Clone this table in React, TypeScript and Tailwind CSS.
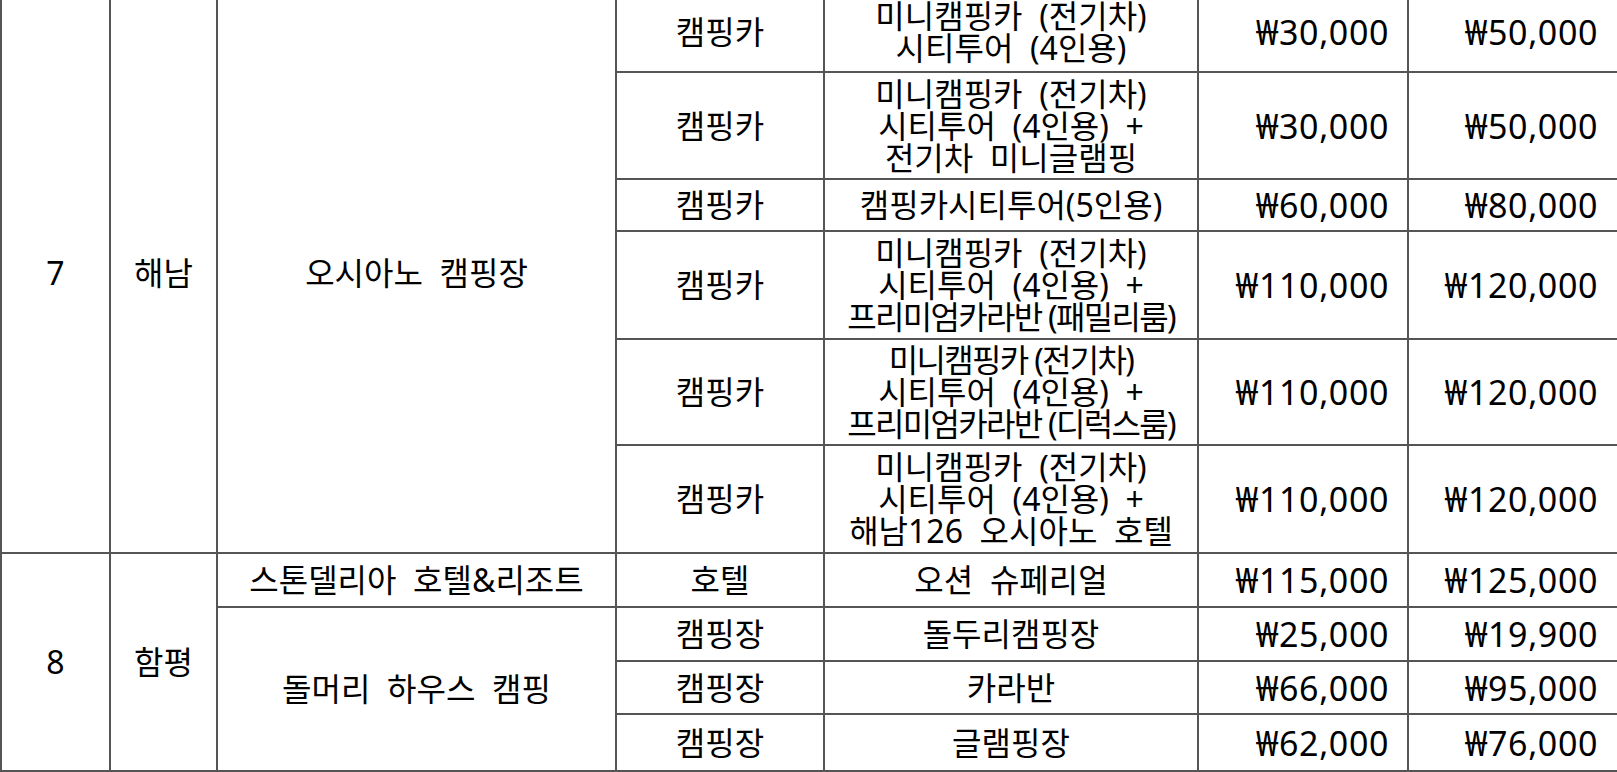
const font = { fontFamily: '"Noto Sans", "Noto Sans CJK KR", sans-serif' };

type Line = { t: string; tight?: boolean };
type Row = { kind: string; name: Line[]; week: string; weekend: string; h: string };

const haenam: Row[] = [
  { kind: "캠핑카", name: [{ t: "미니캠핑카  (전기차)" }, { t: "시티투어  (4인용)" }], week: "₩30,000", weekend: "₩50,000", h: "h-[80px]" },
  { kind: "캠핑카", name: [{ t: "미니캠핑카  (전기차)" }, { t: "시티투어  (4인용)  +" }, { t: "전기차  미니글램핑" }], week: "₩30,000", weekend: "₩50,000", h: "h-[107px]" },
  { kind: "캠핑카", name: [{ t: "캠핑카시티투어(5인용)" }], week: "₩60,000", weekend: "₩80,000", h: "h-[52px]" },
  { kind: "캠핑카", name: [{ t: "미니캠핑카  (전기차)" }, { t: "시티투어  (4인용)  +" }, { t: "프리미엄카라반 (패밀리룸)", tight: true }], week: "₩110,000", weekend: "₩120,000", h: "h-[108px]" },
  { kind: "캠핑카", name: [{ t: "미니캠핑카 (전기차)", tight: true }, { t: "시티투어  (4인용)  +" }, { t: "프리미엄카라반 (디럭스룸)", tight: true }], week: "₩110,000", weekend: "₩120,000", h: "h-[106px]" },
  { kind: "캠핑카", name: [{ t: "미니캠핑카  (전기차)" }, { t: "시티투어  (4인용)  +" }, { t: "해남126  오시아노  호텔" }], week: "₩110,000", weekend: "₩120,000", h: "h-[108px]" },
];

const cell = "border-2 border-[#555] text-center align-middle p-0";
const price = "border-2 border-[#555] text-right align-middle p-0 text-[34px] tracking-[0.6px]";

function Name({ lines }: { lines: Line[] }) {
  return (
    <>
      {lines.map((l, i) => (
        <div key={i} className={l.tight ? "whitespace-pre tracking-[-1.7px]" : "whitespace-pre"}>{l.t}</div>
      ))}
    </>
  );
}

export default function App() {
  return (
    <div className="h-[772px] w-[1617px] overflow-hidden bg-white text-black" style={font}>
      <table className="-mt-[9px] w-[1617px] table-fixed border-collapse text-[32px] leading-[32px]">
        <colgroup>
          <col className="w-[109px]" />
          <col className="w-[107px]" />
          <col className="w-[399px]" />
          <col className="w-[208px]" />
          <col className="w-[374px]" />
          <col className="w-[210px]" />
          <col className="w-[210px]" />
        </colgroup>
        <tbody>
          {haenam.map((r, i) => (
            <tr key={i} className={r.h}>
              {i === 0 && (
                <>
                  <td rowSpan={6} className={cell}>7</td>
                  <td rowSpan={6} className={cell}>해남</td>
                  <td rowSpan={6} className={`${cell} whitespace-pre`}>오시아노  캠핑장</td>
                </>
              )}
              <td className={cell}>{r.kind}</td>
              <td className={cell}><Name lines={r.name} /></td>
              <td className={`${price} pr-[18px]`}>{r.week}</td>
              <td className={`${price} pr-[19px]`}>{r.weekend}</td>
            </tr>
          ))}
          <tr className="h-[54px]">
            <td rowSpan={4} className={cell}>8</td>
            <td rowSpan={4} className={cell}>함평</td>
            <td className={`${cell} whitespace-pre`}>스톤델리아  호텔&리조트</td>
            <td className={cell}>호텔</td>
            <td className={`${cell} whitespace-pre`}>오션  슈페리얼</td>
            <td className={`${price} pr-[18px]`}>₩115,000</td>
            <td className={`${price} pr-[19px]`}>₩125,000</td>
          </tr>
          <tr className="h-[54px]">
            <td rowSpan={3} className={`${cell} whitespace-pre`}>돌머리  하우스  캠핑</td>
            <td className={cell}>캠핑장</td>
            <td className={cell}>돌두리캠핑장</td>
            <td className={`${price} pr-[18px]`}>₩25,000</td>
            <td className={`${price} pr-[19px]`}>₩19,900</td>
          </tr>
          <tr className="h-[53px]">
            <td className={cell}>캠핑장</td>
            <td className={cell}>카라반</td>
            <td className={`${price} pr-[18px]`}>₩66,000</td>
            <td className={`${price} pr-[19px]`}>₩95,000</td>
          </tr>
          <tr className="h-[57px]">
            <td className={cell}>캠핑장</td>
            <td className={cell}>글램핑장</td>
            <td className={`${price} pr-[18px]`}>₩62,000</td>
            <td className={`${price} pr-[19px]`}>₩76,000</td>
          </tr>
        </tbody>
      </table>
    </div>
  );
}
